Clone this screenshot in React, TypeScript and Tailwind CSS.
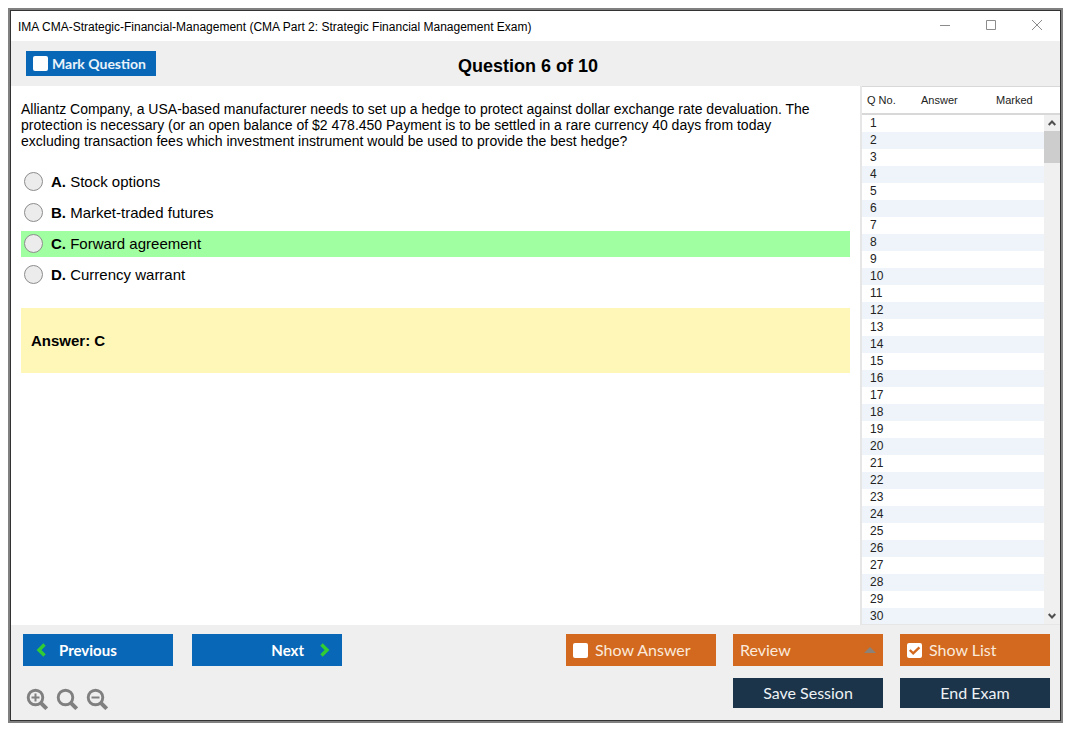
import { useState, type ReactNode } from 'react'

const options = [
  { letter: 'A', text: 'Stock options' },
  { letter: 'B', text: 'Market-traded futures' },
  { letter: 'C', text: 'Forward agreement' },
  { letter: 'D', text: 'Currency warrant' },
]

const correct = 'C'
const rows = Array.from({ length: 30 }, (_, i) => i + 1)

const blueButton =
  'flex h-8 w-[150px] items-center bg-[#0868b7] font-[Lato,sans-serif] text-[15px] font-bold text-white'
const orangeButton =
  'flex h-8 items-center bg-[#d2691e] px-[7px] font-[Lato,sans-serif] text-[16px] text-[#fbe9dc]'
const navyButton =
  'h-[30px] bg-[#1b344a] font-[Lato,sans-serif] text-[16px] text-[#eef2f5]'

function Tick({ checked, onChange, className, children }: {
  checked: boolean
  onChange: (value: boolean) => void
  className: string
  children: ReactNode
}) {
  return (
    <label className={className}>
      <span className="grid">
        <input
          type="checkbox"
          checked={checked}
          onChange={(e) => onChange(e.target.checked)}
          className="col-start-1 row-start-1 size-[15px] appearance-none rounded-xs bg-white"
        />
        {checked && (
          <svg viewBox="0 0 15 15" className="pointer-events-none col-start-1 row-start-1 size-[15px]" fill="none" stroke="#d2691e" strokeWidth="2.4">
            <path d="M2.8 7 6.2 10.4 12.4 4.4" />
          </svg>
        )}
      </span>
      {children}
    </label>
  )
}

function Chevron({ d }: { d: string }) {
  return (
    <svg viewBox="0 0 10 14" className="h-[14px] w-[10px]" fill="none" stroke="#32cd32" strokeWidth="3.4">
      <path d={d} />
    </svg>
  )
}

function Magnifier({ label, sign }: { label: string; sign?: string }) {
  return (
    <button type="button" aria-label={label}>
      <svg viewBox="0 0 22 22" className="size-[22px]" fill="none" stroke="#808080">
        <circle cx="9.5" cy="9.5" r="7.3" strokeWidth="2.9" />
        <path d="M14.3 14.3 20.7 20.7" strokeWidth="4" />
        {sign && <path d={sign} strokeWidth="2" />}
      </svg>
    </button>
  )
}

function TitleBar() {
  return (
    <header className="flex h-[30px] shrink-0 items-center justify-between pt-px pr-[17px] pl-[7px] text-[12px]">
      <h1>IMA CMA-Strategic-Financial-Management (CMA Part 2: Strategic Financial Management Exam)</h1>
      <div className="flex gap-[34px] pb-[3px]">
        <button type="button" aria-label="Minimize">
          <svg viewBox="0 0 12 12" className="size-3" stroke="#8c8c8c"><path d="M1 6.5h10" /></svg>
        </button>
        <button type="button" aria-label="Maximize">
          <svg viewBox="0 0 12 12" className="size-3" fill="none" stroke="#8c8c8c"><path d="M1.5 1.5h9v9h-9z" /></svg>
        </button>
        <button type="button" aria-label="Close">
          <svg viewBox="0 0 12 12" className="size-3" stroke="#8c8c8c"><path d="M1 1l10 10M11 1L1 11" /></svg>
        </button>
      </div>
    </header>
  )
}

function QuestionList() {
  return (
    <aside className="relative w-[200px] shrink-0 overflow-hidden border-b border-l-2 border-[#e6e6e6] text-[#222]">
      <table className="w-full border-separate border-spacing-0 text-left">
        <thead className="text-[11px]">
          <tr className="h-[29px] *:border-t *:border-b-2 *:border-[#d8d8d8] *:pl-[5px] *:font-normal">
            <th className="w-[54px]">Q No.</th>
            <th className="w-[75px]">Answer</th>
            <th>Marked</th>
          </tr>
        </thead>
        <tbody className="text-[12px] leading-[17px]">
          {rows.map((n) => (
            <tr key={n} className="h-[17px] even:bg-[#eef4f9]">
              <td className="p-0 pl-2">{n}</td>
              <td className="p-0" />
              <td className="p-0" />
            </tr>
          ))}
        </tbody>
      </table>
      <div className="absolute top-[29px] right-0 bottom-0 flex w-4 flex-col bg-[#f0f0f0]">
        <button type="button" aria-label="Scroll up" className="flex h-4 items-center justify-center">
          <svg viewBox="0 0 8 6" className="h-[6px] w-2" fill="none" stroke="#505050" strokeWidth="2"><path d="M.7 5 4 1.5 7.3 5" /></svg>
        </button>
        <div className="h-8 bg-[#cdcdcd]" />
        <button type="button" aria-label="Scroll down" className="mt-auto flex h-4 items-center justify-center">
          <svg viewBox="0 0 8 6" className="h-[6px] w-2" fill="none" stroke="#505050" strokeWidth="2"><path d="M.7 1 4 4.5 7.3 1" /></svg>
        </button>
      </div>
    </aside>
  )
}

export default function App() {
  const [marked, setMarked] = useState(false)
  const [showAnswer, setShowAnswer] = useState(false)
  const [showList, setShowList] = useState(true)
  const [picked, setPicked] = useState('')

  return (
    <div className="h-screen bg-white pt-2 pr-3 pb-3 pl-2 font-['Liberation_Sans',Arial,sans-serif] text-black">
      <div className="h-full border-2 border-[#808080]">
        <div className="flex h-full flex-col border border-[#333]">
          <TitleBar />

          <div className="grid h-[45px] shrink-0 grid-cols-[1fr_auto_1fr] items-center bg-[#efefef] pr-[30px] pl-[15px]">
            <Tick
              checked={marked}
              onChange={setMarked}
              className="flex h-[25px] w-[130px] items-center gap-1 bg-[#0868b7] pl-[7px] font-[Lato,sans-serif] text-[14px] font-bold text-[#eaf3fa]"
            >
              Mark Question
            </Tick>
            <h2 className="pt-[5px] text-[18px] font-bold">Question 6 of 10</h2>
          </div>

          <div className="flex min-h-0 flex-1">
            <main className="min-w-0 flex-1 px-[10px] pt-[15px] text-[15px] leading-4">
              <p className="text-[14px] leading-4">
                Alliantz Company, a USA-based manufacturer needs to set up a hedge to protect against dollar exchange rate devaluation. The
                <br />
                protection is necessary (or an open balance of $2 478.450 Payment is to be settled in a rare currency 40 days from today
                <br />
                excluding transaction fees which investment instrument would be used to provide the best hedge?
              </p>
              <div className="mt-5 flex flex-col gap-[5px]">
                {options.map((o) => (
                  <label
                    key={o.letter}
                    className={`flex h-[26px] items-center gap-2 pl-[3px] ${o.letter === correct ? 'bg-[#a0ffa0]' : ''}`}
                  >
                    <input
                      type="radio"
                      name="answer"
                      value={o.letter}
                      checked={picked === o.letter}
                      onChange={() => setPicked(o.letter)}
                      className="mb-px size-[19px] appearance-none rounded-full border border-[#8c8c8c] bg-[#ececec] checked:border-4"
                    />
                    <span><b>{o.letter}.</b> {o.text}</span>
                  </label>
                ))}
              </div>
              <div className="mt-5 flex h-[65px] items-center bg-[#fef7b8] px-[10px] font-bold">Answer: {correct}</div>
            </main>
            {showList && <QuestionList />}
          </div>

          <footer className="flex h-[95px] shrink-0 justify-between bg-[#efefef] pt-[9px] pr-[10px] pl-3">
            <div className="flex flex-col gap-[22px]">
              <div className="flex gap-[19px]">
                <button type="button" className={`${blueButton} gap-[13px] pl-[13px]`}>
                  <Chevron d="M8.5 1.5 3 7l5.5 5.5" />
                  Previous
                </button>
                <button type="button" className={`${blueButton} justify-end gap-4 pr-3`}>
                  Next
                  <Chevron d="M1.5 1.5 7 7l-5.5 5.5" />
                </button>
              </div>
              <div className="flex gap-2 pl-[3px]">
                <Magnifier label="Zoom in" sign="M5.5 9.5h8M9.5 5.5v8" />
                <Magnifier label="Reset zoom" />
                <Magnifier label="Zoom out" sign="M5.5 9.5h8" />
              </div>
            </div>

            <div className="grid grid-cols-[150px_150px_150px] content-start gap-x-[17px] gap-y-3">
              <Tick checked={showAnswer} onChange={setShowAnswer} className={`${orangeButton} gap-[7px]`}>Show Answer</Tick>
              <button type="button" aria-haspopup="menu" className={`${orangeButton} justify-between`}>
                Review
                <svg viewBox="0 0 12 6" className="h-[6px] w-3" fill="#8a8178"><path d="M0 6 6 0l6 6z" /></svg>
              </button>
              <Tick checked={showList} onChange={setShowList} className={`${orangeButton} gap-[7px]`}>Show List</Tick>
              <button type="button" className={`${navyButton} col-start-2`}>Save Session</button>
              <button type="button" className={navyButton}>End Exam</button>
            </div>
          </footer>
        </div>
      </div>
    </div>
  )
}
